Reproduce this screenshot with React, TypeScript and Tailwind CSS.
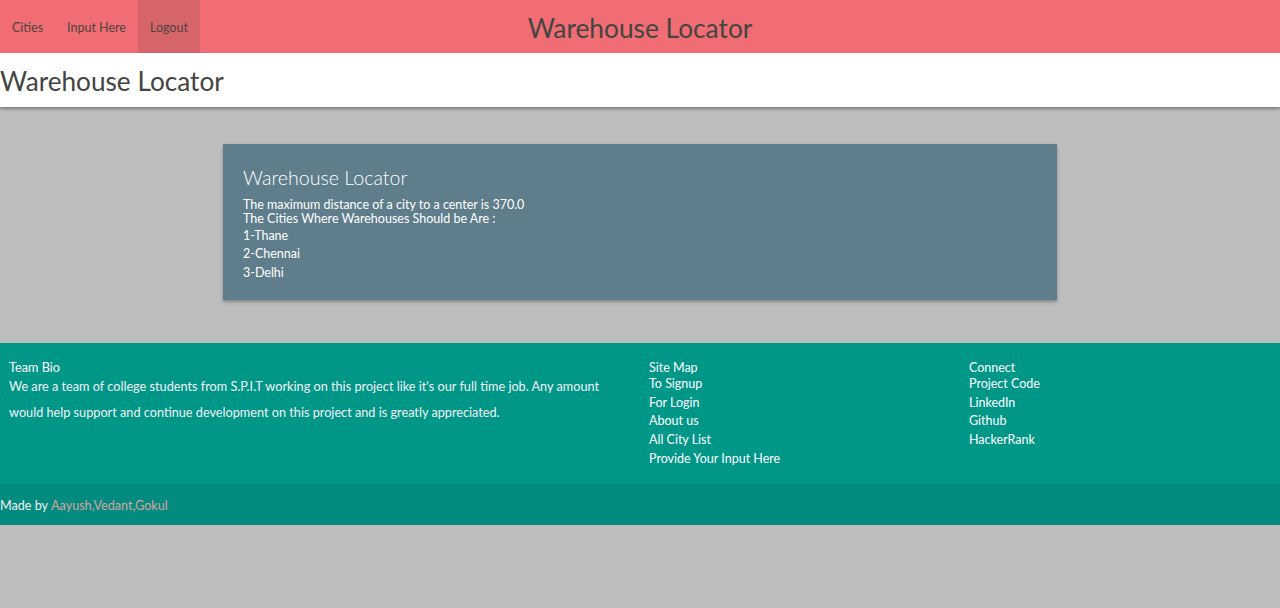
import React from "react"

const navLinks = ["Cities", "Input Here", "Logout"]
const siteMap = ["To Signup", "For Login", "About us", "All City List", "Provide Your Input Here"]
const connect = ["Project Code", "LinkedIn", "Github", "HackerRank"]
const cities = ["1-Thane", "2-Chennai", "3-Delhi"]

export default function App() {
  return (
    <div className="min-h-[608px] bg-[#bdbdbd] font-['Lato','Liberation_Sans',sans-serif]">
      {/* NAV */}
      <nav className="grid h-[53px] grid-cols-[1fr_auto_1fr] bg-[#f06e73]">
        <ul className="flex h-full">
          {navLinks.map((l) => (
            <li key={l}>
              <a
                href="#"
                className={
                  "flex h-[53px] items-center px-3 pt-[4px] text-[12.5px] text-[#4d4446] " +
                  (l === "Logout" ? "bg-[#d6646a]" : "")
                }
              >
                {l}
              </a>
            </li>
          ))}
        </ul>
        <a href="#" className="flex items-center pt-[4px] text-[26.3px] text-[#444]">
          Warehouse Locator
        </a>
        <div />
      </nav>

      {/* PAGE HEADER */}
      <div className="relative flex h-[54px] items-center bg-white pt-[3px] shadow-[0_2px_3px_rgba(0,0,0,0.35)]">
        <h1 className="text-[26.2px] text-[#444]">Warehouse Locator</h1>
      </div>

      {/* RESULT */}
      <main className="pt-[37px] pb-[43px]">
        <div className="mx-auto h-[156px] w-[834px] bg-[#607d8b] px-5 pt-[20px] text-white shadow-[0_2px_3px_rgba(0,0,0,0.3)]">
          <h2 className="text-[19.6px] font-light leading-[28px]">Warehouse Locator</h2>
          <p className="mt-[6px] text-[12.5px] leading-[14px]">
            The maximum distance of a city to a center is 370.0
            <br />
            The Cities Where Warehouses Should be Are :
          </p>
          <ul className="mt-[1px] text-[12.5px] leading-[18.3px]">
            {cities.map((c) => (
              <li key={c}>{c}</li>
            ))}
          </ul>
        </div>
      </main>

      {/* FOOTER */}
      <footer className="bg-[#009688] text-white">
        <div className="grid h-[141px] grid-cols-[640px_320px_320px] pt-[17px]">
          <div className="px-[9px]">
            <h5 className="text-[12.7px] leading-[14px]">Team Bio</h5>
            <p className="-mt-[1px] text-[12.7px] leading-[26px] text-[#f2f2f2]">
              We are a team of college students from S.P.I.T working on this project like it's our full time job. Any amount would help support and continue development on this project and is greatly appreciated.
            </p>
          </div>
          <div className="px-[9px] pt-[1px]">
            <h5 className="text-[12.5px] leading-[14px]">Site Map</h5>
            <ul className="text-[12.5px] leading-[18.7px]">
              {siteMap.map((s) => (
                <li key={s}>
                  <a href="#">{s}</a>
                </li>
              ))}
            </ul>
          </div>
          <div className="px-[9px] pt-[1px]">
            <h5 className="text-[12.5px] leading-[14px]">Connect</h5>
            <ul className="text-[12.5px] leading-[18.7px]">
              {connect.map((s) => (
                <li key={s}>
                  <a href="#">{s}</a>
                </li>
              ))}
            </ul>
          </div>
        </div>
        <div className="flex h-[41px] items-center bg-[#038b7f] pt-[3px] text-[12.6px] text-[#f0f0f0]">
          Made by&nbsp;<a href="#" className="text-[#d9a39f]">Aayush,Vedant,Gokul</a>
        </div>
      </footer>
    </div>
  )
}
